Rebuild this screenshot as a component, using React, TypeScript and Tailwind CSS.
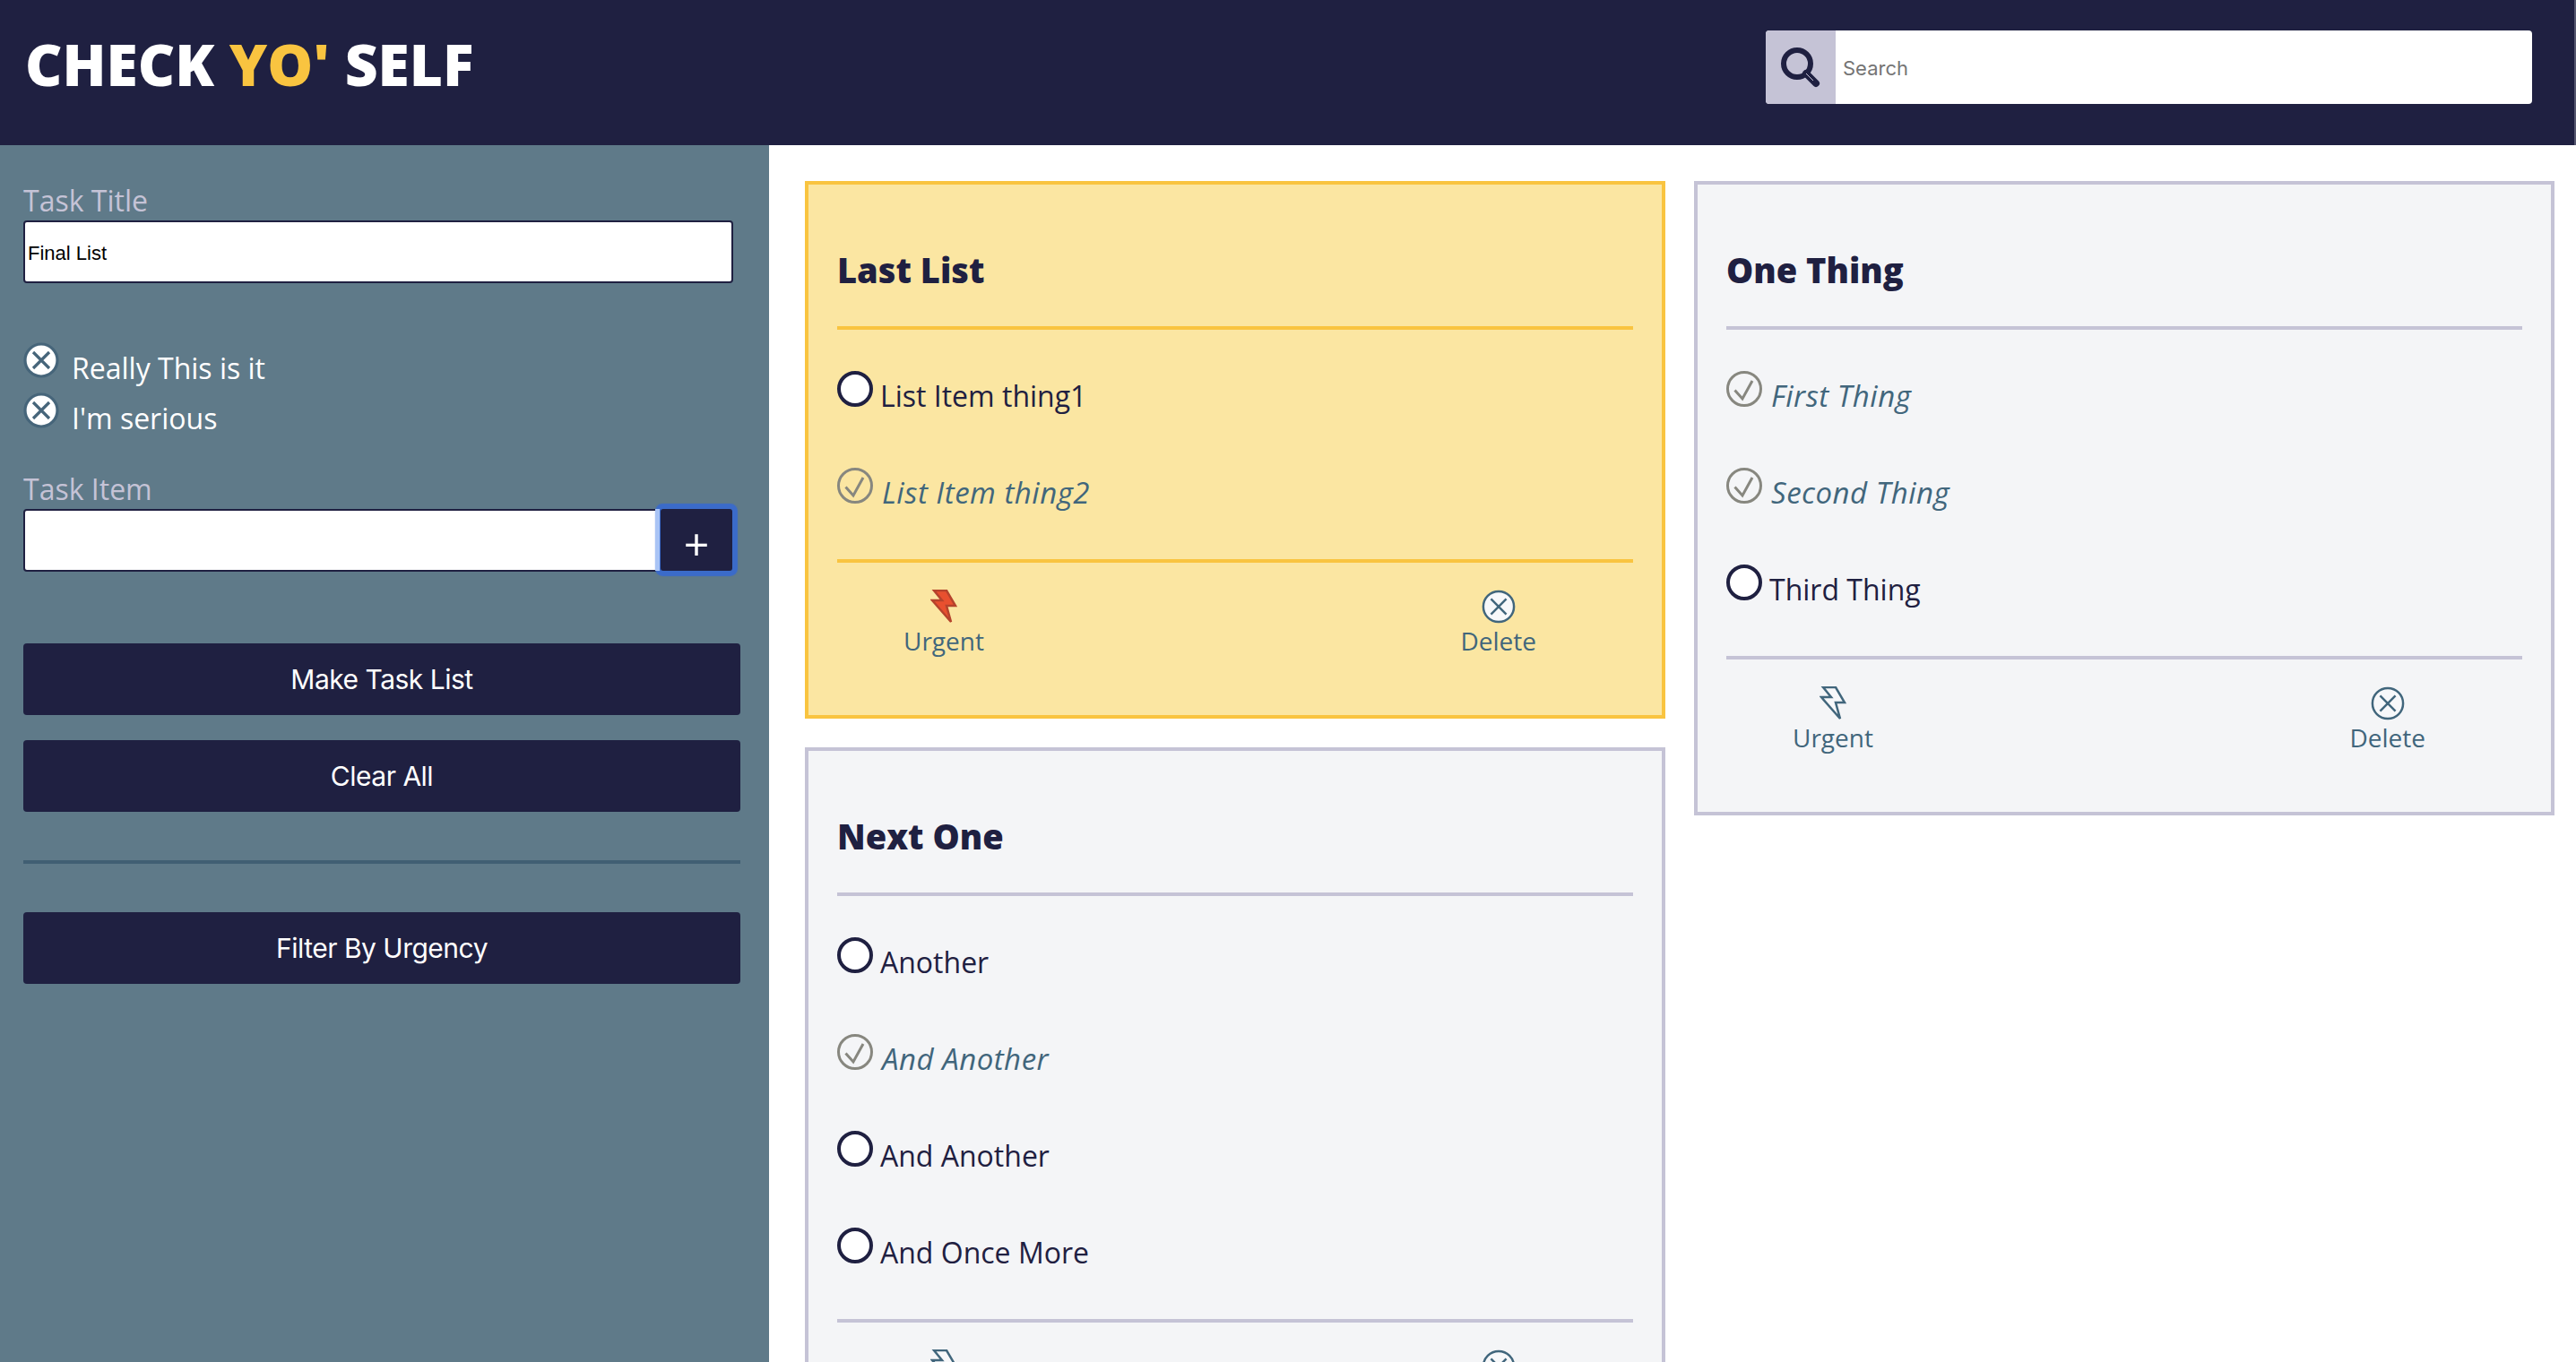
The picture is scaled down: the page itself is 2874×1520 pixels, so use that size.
const NAVY = "#1f2041";

function Bolt({ urgent }: { urgent?: boolean }) {
  return (
    <svg width="30" height="38" viewBox="0 0 30 38" className="block">
      <path
        d="M4 1 H18 L28 18 H18 L23 36 L2 12 H13 Z"
        fill={urgent ? "#e8502f" : "#f7f8fa"}
        stroke={urgent ? "#b5432c" : "#41667c"}
        strokeWidth="2.5"
        strokeLinejoin="miter"
      />
    </svg>
  );
}

function XCircle({
  size = 38,
  stroke = "#41667c",
  fill = "#f7f8fa",
  weight = 2.6,
}: {
  size?: number;
  stroke?: string;
  fill?: string;
  weight?: number;
}) {
  return (
    <svg width={size} height={size} viewBox="0 0 40 40" className="block shrink-0">
      <circle cx="20" cy="20" r="18" fill={fill} stroke={stroke} strokeWidth={weight} />
      <path d="M11 11 L29 29 M29 11 L11 29" stroke={stroke} strokeWidth={weight} fill="none" />
    </svg>
  );
}

function CheckCircle() {
  return (
    <svg width="40" height="40" viewBox="0 0 40 40" className="block shrink-0">
      <circle cx="20" cy="20" r="18.5" fill="none" stroke="#87877f" strokeWidth="3" />
      <path d="M9.5 21.5 L18 31 L29 11" stroke="#87877f" strokeWidth="3" fill="none" />
    </svg>
  );
}

function Radio() {
  return <span className="block w-10 h-10 shrink-0 rounded-full bg-white border-[4px] border-[#1f2041]" />;
}

function Item({ text, done }: { text: string; done?: boolean }) {
  return (
    <div className="h-[108px] flex items-start pt-[46px]">
      {done ? <CheckCircle /> : <Radio />}
      <span
        className={
          done
            ? "ml-[10px] mt-[6px] text-[33px] tracking-[0.5px] leading-[44px] italic text-[#41667c]"
            : "ml-[8px] mt-[6px] text-[32px] leading-[44px] text-[#1f2041]"
        }
      >
        {text}
      </span>
    </div>
  );
}

function Card({ title, items, urgent }: { title: string; items: { t: string; d?: boolean }[]; urgent?: boolean }) {
  const rule = urgent ? "border-[#f9c440]" : "border-[#c5c3d6]";
  return (
    <div className={`w-[960px] border-4 px-[32px] ${rule} ${urgent ? "bg-[#fbe6a2]" : "bg-[#f4f5f7]"}`}>
      <div className={`h-[162px] border-b-4 ${rule}`}>
        <h2 className="pt-[67px] text-[38px] leading-[56px] font-extrabold text-[#1f2041]">{title}</h2>
      </div>
      <div className={`pb-[40px] border-b-4 ${rule}`}>
        {items.map((i) => (
          <Item key={i.t} text={i.t} done={i.d} />
        ))}
      </div>
      <div className="h-[170px] flex justify-between items-start pl-[74px] pr-[108px] pt-[30px] text-[28px] leading-[38px] text-[#41667c]">
        <div className="flex flex-col items-center">
          <Bolt urgent={urgent} />
          <span>Urgent</span>
        </div>
        <div className="flex flex-col items-center">
          <XCircle />
          <span>Delete</span>
        </div>
      </div>
    </div>
  );
}

function ActionButton({ label }: { label: string }) {
  return (
    <button className="block w-[800px] h-[80px] rounded-[4px] bg-[#1f2041] text-white text-[30px] tracking-[-0.5px] font-['Inter',sans-serif]">
      {label}
    </button>
  );
}

export default function App() {
  return (
    <div className="h-[1520px] w-full overflow-hidden bg-white font-['Open_Sans',sans-serif]">
      <header className="h-[162px] bg-[#1f2041] border-r-2 border-[#55566f] flex items-start justify-between pl-[28px] pr-[47px]">
        <h1 className="mt-[28px] text-[64px] leading-[88px] font-extrabold text-white">
          CHECK <span className="text-[#f9c440]">YO'</span> SELF
        </h1>
        <div className="mt-[34px] w-[855px] h-[82px] rounded-[4px] overflow-hidden flex bg-white">
          <div className="w-[78px] bg-[#c5c3d6] flex items-center justify-center">
            <svg width="46" height="46" viewBox="0 0 46 46">
              <circle cx="19" cy="19" r="15" fill="none" stroke={NAVY} strokeWidth="6" />
              <path d="M29 30 L40 41" stroke={NAVY} strokeWidth="8" strokeLinecap="round" />
              <path d="M29 30 L37 38" stroke="#c5c3d6" strokeWidth="1" />
            </svg>
          </div>
          <div className="pl-[8px] pt-[2px] flex items-center text-[22px] text-[#757575] font-['Inter',sans-serif]">Search</div>
        </div>
      </header>
      <div className="flex items-start">
        <aside className="w-[858px] h-[1358px] bg-[#5f7a89] shrink-0 pl-[26px] pt-[40px]">
          <label className="block text-[32px] leading-[44px] text-[#c5c3d6]">Task Title</label>
          <div className="w-[792px] h-[70px] border-2 border-[#1f2041] rounded-[4px] bg-white flex items-center pl-[3px] pt-[2px] text-[22px] text-black font-['Liberation_Sans',sans-serif]">
            Final List
          </div>
          <div className="mt-[66px] flex items-start h-[56px] text-white text-[32px] leading-[44px]">
            <XCircle size={40} stroke="#46657a" fill="#ffffff" weight={3.2} />
            <span className="ml-[14px] mt-[7px]">Really This is it</span>
          </div>
          <div className="flex items-start h-[56px] text-white text-[32px] leading-[44px]">
            <XCircle size={40} stroke="#46657a" fill="#ffffff" weight={3.2} />
            <span className="ml-[14px] mt-[7px]">I'm serious</span>
          </div>
          <label className="block mt-[30px] text-[32px] leading-[44px] text-[#c5c3d6]">Task Item</label>
          <div className="w-[791px] h-[70px] flex">
            <div className="flex-1 border-2 border-[#1f2041] rounded-l-[4px] bg-white" />
            <button className="relative w-[80px] h-[69px] rounded-[3px] bg-[#1f2041] text-white text-[50px] font-medium leading-none pt-[8px] shadow-[0_0_1px_6px_#3b6bc9]">
              <span className="absolute left-[-6px] top-0 w-[5px] h-full bg-[#a9c4f5]" />+
            </button>
          </div>
          <div className="mt-[80px] flex flex-col gap-[28px]">
            <ActionButton label="Make Task List" />
            <ActionButton label="Clear All" />
          </div>
          <div className="w-[800px] h-[4px] mt-[54px] bg-[#415f73]" />
          <div className="mt-[54px]">
            <ActionButton label="Filter By Urgency" />
          </div>
        </aside>
        <main className="pl-[40px] pt-[40px] flex gap-[32px] items-start">
          <div className="flex flex-col gap-[32px]">
            <Card urgent title="Last List" items={[{ t: "List Item thing1" }, { t: "List Item thing2", d: true }]} />
            <Card
              title="Next One"
              items={[{ t: "Another" }, { t: "And Another", d: true }, { t: "And Another" }, { t: "And Once More" }]}
            />
          </div>
          <Card title="One Thing" items={[{ t: "First Thing", d: true }, { t: "Second Thing", d: true }, { t: "Third Thing" }]} />
        </main>
      </div>
    </div>
  );
}
